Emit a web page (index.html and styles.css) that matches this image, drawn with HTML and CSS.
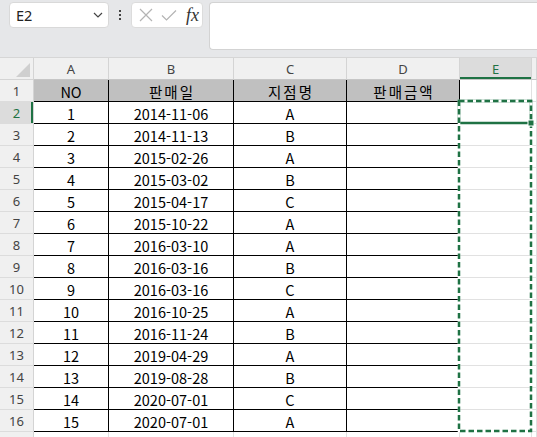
FILE: index.html
```html
<!DOCTYPE html>
<html lang="ko">
<head>
<meta charset="utf-8">
<link rel="stylesheet" href="styles.css">
</head>
<body>
<div class="toolbar">
  <div class="namebox">
    <span class="ref">E2</span>
    <svg class="chev" width="10" height="6" viewBox="0 0 10 6"><path d="M1 1 L5 5 L9 1" fill="none" stroke="#444" stroke-width="1.2"/></svg>
  </div>
  <div class="dots"><i></i><i></i><i></i></div>
  <div class="fxbox">
    <svg width="16" height="16" viewBox="0 0 16 16"><path d="M2 2 L14 14 M14 2 L2 14" stroke="#b4b4b4" stroke-width="1.2" fill="none"/></svg>
    <svg width="16" height="16" viewBox="0 0 16 16"><path d="M1 8.5 L5.5 13 L15 3.5" stroke="#b4b4b4" stroke-width="1.2" fill="none"/></svg>
    <span class="fx">fx</span>
  </div>
  <div class="formula"></div>
</div>
<div class="sheet">
  <div class="corner"><span class="tri"></span></div>
  <div class="ch">A</div><div class="ch">B</div><div class="ch">C</div><div class="ch">D</div><div class="ch sel">E</div><div class="ch"></div>

  <div class="rh">1</div><div class="c hd">NO</div><div class="c hd ko">판매일</div><div class="c hd ko">지점명</div><div class="c hd ko">판매금액</div><div class="g"></div><div class="g"></div>
  <div class="rh sel">2</div><div class="c">1</div><div class="c">2014-11-06</div><div class="c">A</div><div class="c"></div><div class="g"></div><div class="g"></div>
  <div class="rh">3</div><div class="c">2</div><div class="c">2014-11-13</div><div class="c">B</div><div class="c"></div><div class="g"></div><div class="g"></div>
  <div class="rh">4</div><div class="c">3</div><div class="c">2015-02-26</div><div class="c">A</div><div class="c"></div><div class="g"></div><div class="g"></div>
  <div class="rh">5</div><div class="c">4</div><div class="c">2015-03-02</div><div class="c">B</div><div class="c"></div><div class="g"></div><div class="g"></div>
  <div class="rh">6</div><div class="c">5</div><div class="c">2015-04-17</div><div class="c">C</div><div class="c"></div><div class="g"></div><div class="g"></div>
  <div class="rh">7</div><div class="c">6</div><div class="c">2015-10-22</div><div class="c">A</div><div class="c"></div><div class="g"></div><div class="g"></div>
  <div class="rh">8</div><div class="c">7</div><div class="c">2016-03-10</div><div class="c">A</div><div class="c"></div><div class="g"></div><div class="g"></div>
  <div class="rh">9</div><div class="c">8</div><div class="c">2016-03-16</div><div class="c">B</div><div class="c"></div><div class="g"></div><div class="g"></div>
  <div class="rh">10</div><div class="c">9</div><div class="c">2016-03-16</div><div class="c">C</div><div class="c"></div><div class="g"></div><div class="g"></div>
  <div class="rh">11</div><div class="c">10</div><div class="c">2016-10-25</div><div class="c">A</div><div class="c"></div><div class="g"></div><div class="g"></div>
  <div class="rh">12</div><div class="c">11</div><div class="c">2016-11-24</div><div class="c">B</div><div class="c"></div><div class="g"></div><div class="g"></div>
  <div class="rh">13</div><div class="c">12</div><div class="c">2019-04-29</div><div class="c">A</div><div class="c"></div><div class="g"></div><div class="g"></div>
  <div class="rh">14</div><div class="c">13</div><div class="c">2019-08-28</div><div class="c">B</div><div class="c"></div><div class="g"></div><div class="g"></div>
  <div class="rh">15</div><div class="c">14</div><div class="c">2020-07-01</div><div class="c">C</div><div class="c"></div><div class="g"></div><div class="g"></div>
  <div class="rh">16</div><div class="c">15</div><div class="c">2020-07-01</div><div class="c">A</div><div class="c"></div><div class="g"></div><div class="g"></div>
  <div class="rh"></div><div class="g"></div><div class="g"></div><div class="g"></div><div class="g"></div><div class="g"></div><div class="g"></div>

  <svg class="overlay" width="537" height="379" viewBox="0 0 537 379">
    <rect x="459" y="43" width="72" height="22" fill="none" stroke="#1f7244" stroke-width="2.5"/>
    <rect x="459" y="43" width="72" height="330" fill="none" stroke="#ffffff" stroke-width="2.5"/>
    <rect x="459" y="43" width="72" height="330" fill="none" stroke="#1f7244" stroke-width="2.5" stroke-dasharray="5.5 3"/>
    <rect x="528" y="62" width="6" height="6" fill="#1f7244" stroke="#ffffff" stroke-width="1"/>
  </svg>
</div>
</body>
</html>
```
FILE: styles.css
```css
html, body {
  margin: 0;
  padding: 0;
  width: 537px;
  height: 437px;
  overflow: hidden;
  background: #ffffff;
  font-family: "Noto Sans", "Noto Sans CJK KR", sans-serif;
}

.toolbar {
  height: 58px;
  box-sizing: border-box;
  background: #e6e7e9;
  border-bottom: 1px solid #d6d6d6;
  display: flex;
  align-items: flex-start;
  padding-top: 2px;
}

.namebox {
  margin-left: 9px;
  width: 100px;
  height: 26px;
  box-sizing: border-box;
  background: #fff;
  border: 1px solid #d9d9d9;
  border-radius: 4px;
  display: flex;
  align-items: center;
  justify-content: space-between;
  padding: 0 5px 0 6px;
}

.ref {
  font-size: 14.5px;
  color: #222;
  line-height: 1;
}

.chev {
  display: block;
}

.dots {
  width: 22px;
  height: 26px;
  display: flex;
  flex-direction: column;
  align-items: center;
  justify-content: center;
  gap: 2px;
}

.dots i {
  display: block;
  width: 2px;
  height: 2px;
  background: #444;
}

.fxbox {
  width: 72px;
  height: 26px;
  box-sizing: border-box;
  background: #fff;
  border: 1px solid #dcdcdc;
  border-radius: 4px;
  display: flex;
  align-items: center;
  padding-left: 6px;
  gap: 7px;
}

.fxbox svg {
  display: block;
}

.fx {
  font-family: "Liberation Serif", "DejaVu Serif", serif;
  font-style: italic;
  font-size: 18px;
  color: #333;
  line-height: 1;
  margin-left: 2px;
}

.formula {
  margin-left: 6px;
  flex: 1;
  height: 48px;
  box-sizing: border-box;
  background: #fff;
  border: 1px solid #d3d3d3;
  border-right: none;
  border-radius: 4px 0 0 4px;
}

.sheet {
  position: relative;
  display: grid;
  grid-template-columns: 34px 75px 125px 113px 113px 72px 1fr;
  grid-auto-rows: 22px;
}

.sheet > div {
  box-sizing: border-box;
  border-right: 1px solid #e1e1e1;
  border-bottom: 1px solid #e1e1e1;
  display: flex;
  align-items: center;
  justify-content: center;
  overflow: hidden;
}

.corner {
  background: #f0f0f0;
  position: relative;
  border-color: #d4d4d4 !important;
}

.tri {
  position: absolute;
  right: 3px;
  bottom: 2px;
  width: 0;
  height: 0;
  border-left: 14px solid transparent;
  border-bottom: 14px solid #cfcfcf;
}

.ch {
  background: #f0f0f0;
  color: #444;
  font-size: 13px;
  border-right-color: #d4d4d4 !important;
  border-bottom-color: #c6c6c6 !important;
}

.ch.sel {
  background: #dcdcdc;
  color: #1f7244;
  box-shadow: inset 0 -2px 0 #1f7244;
}

.rh {
  background: #f0f0f0;
  color: #444;
  font-size: 13px;
  border-right-color: #d4d4d4 !important;
  border-bottom-color: #dcdcdc !important;
}

.rh.sel {
  background: #dcdcdc;
  color: #1f7244;
  box-shadow: inset -2px 0 0 #1f7244;
}

.c {
  font-family: "Noto Sans CJK KR", "Noto Sans", sans-serif;
  font-size: 14.5px;
  color: #000;
  border-right-color: #000 !important;
  border-bottom-color: #000 !important;
  padding-top: 1px;
}

.c.hd {
  background: #c0c0c0;
}

.c.ko {
  letter-spacing: 2px;
  text-indent: 2px;
}

.overlay {
  position: absolute;
  left: 0;
  top: 0;
  pointer-events: none;
}
```
